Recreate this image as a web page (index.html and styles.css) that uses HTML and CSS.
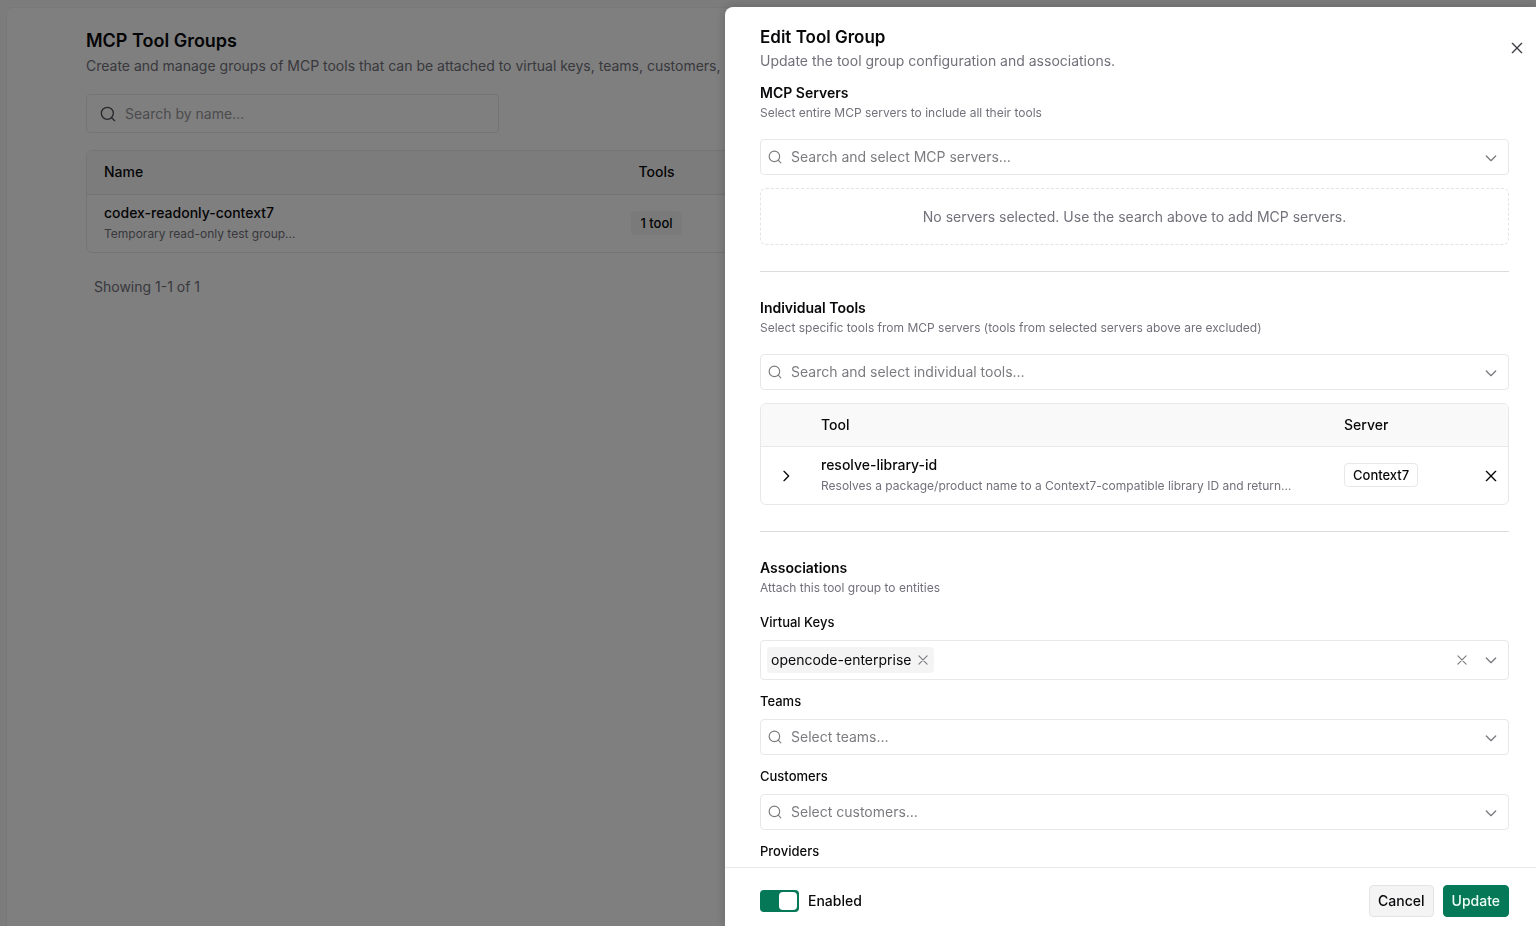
FILE: index.html
```html
<!DOCTYPE html>
<html lang="en">
<head>
<meta charset="utf-8">
<meta name="viewport" content="initial-scale=1.0, width=device-width">
<title>MCP Tool Groups</title>
<link rel="stylesheet" href="styles.css">
</head>
<body>

<!-- shared icons -->
<svg class="sprite" xmlns="http://www.w3.org/2000/svg">
  <symbol id="search" viewBox="0 0 24 24"><circle cx="11" cy="11" r="9"/><path d="M22 22l-4.5-4.5"/></symbol>
  <symbol id="down" viewBox="0 0 24 24"><path d="M5 9l7 7 7-7"/></symbol>
  <symbol id="right" viewBox="0 0 24 24"><path d="M9 5l7 7-7 7"/></symbol>
  <symbol id="x" viewBox="0 0 24 24"><path d="M19 5L5 19M5 5l14 14"/></symbol>
</svg>

<main class="page">
  <h1>MCP Tool Groups</h1>
  <p class="lead">Create and manage groups of MCP tools that can be attached to virtual keys, teams, customers, users</p>

  <label class="page-search">
    <svg class="icon"><use href="#search"/></svg>
    <input type="text" placeholder="Search by name…" aria-label="Search by name">
  </label>

  <div class="table-box">
    <table class="groups">
      <colgroup><col class="col-name"><col class="col-tools"><col></colgroup>
      <thead>
        <tr><th>Name</th><th class="mid">Tools</th><th></th></tr>
      </thead>
      <tbody>
        <tr>
          <td><div class="name">codex-readonly-context7</div><div class="sub">Temporary read-only test group…</div></td>
          <td class="mid"><span class="badge soft">1 tool</span></td>
          <td></td>
        </tr>
      </tbody>
    </table>
  </div>
  <p class="count">Showing 1-1 of 1</p>
</main>

<div class="overlay"></div>

<form class="sheet" role="dialog" aria-labelledby="sheet-title">
  <button type="button" class="plain close" aria-label="Close"><svg class="icon"><use href="#x"/></svg></button>

  <div class="content">
    <header>
      <h2 id="sheet-title">Edit Tool Group</h2>
      <p class="lead">Update the tool group configuration and associations.</p>
    </header>

    <section>
      <h3><label for="servers">MCP Servers</label></h3>
      <p class="hint">Select entire MCP servers to include all their tools</p>
      <div class="combo">
        <svg class="icon small"><use href="#search"/></svg>
        <input type="text" id="servers" role="combobox" placeholder="Search and select MCP servers…">
        <svg class="icon caret"><use href="#down"/></svg>
      </div>
      <div class="empty">No servers selected. Use the search above to add MCP servers.</div>
    </section>

    <hr>

    <section>
      <h3><label for="tools">Individual Tools</label></h3>
      <p class="hint">Select specific tools from MCP servers (tools from selected servers above are excluded)</p>
      <div class="combo">
        <svg class="icon small"><use href="#search"/></svg>
        <input type="text" id="tools" role="combobox" placeholder="Search and select individual tools…">
        <svg class="icon caret"><use href="#down"/></svg>
      </div>
      <div class="table-box picked">
        <table class="tools">
          <colgroup><col class="col-open"><col><col class="col-server"><col class="col-remove"></colgroup>
          <thead>
            <tr><th></th><th>Tool</th><th>Server</th><th></th></tr>
          </thead>
          <tbody>
            <tr>
              <td><button type="button" class="plain" aria-label="Expand"><svg class="icon"><use href="#right"/></svg></button></td>
              <td><div class="name">resolve-library-id</div><div class="sub">Resolves a package/product name to a Context7-compatible library ID and return…</div></td>
              <td><span class="badge line">Context7</span></td>
              <td><button type="button" class="plain" aria-label="Remove"><svg class="icon"><use href="#x"/></svg></button></td>
            </tr>
          </tbody>
        </table>
      </div>
    </section>

    <hr>

    <section>
      <h3>Associations</h3>
      <p class="hint tight">Attach this tool group to entities</p>

      <div class="field">
        <label for="keys">Virtual Keys</label>
        <div class="combo multi">
          <span class="tag">opencode-enterprise
            <button type="button" class="plain" aria-label="Remove opencode-enterprise"><svg class="icon small"><use href="#x"/></svg></button>
          </span>
          <input type="text" id="keys" role="combobox">
          <button type="button" class="plain" aria-label="Clear"><svg class="icon small"><use href="#x"/></svg></button>
          <svg class="icon caret"><use href="#down"/></svg>
        </div>
      </div>

      <div class="field">
        <label for="teams">Teams</label>
        <div class="combo">
          <svg class="icon small"><use href="#search"/></svg>
          <input type="text" id="teams" role="combobox" placeholder="Select teams…">
          <svg class="icon caret"><use href="#down"/></svg>
        </div>
      </div>

      <div class="field">
        <label for="customers">Customers</label>
        <div class="combo">
          <svg class="icon small"><use href="#search"/></svg>
          <input type="text" id="customers" role="combobox" placeholder="Select customers…">
          <svg class="icon caret"><use href="#down"/></svg>
        </div>
      </div>

      <div class="field">
        <span>Providers</span>
      </div>
    </section>
  </div>

  <footer>
    <label class="toggle"><input type="checkbox" checked>Enabled</label>
    <button type="button" class="btn">Cancel</button>
    <button type="submit" class="btn primary">Update</button>
  </footer>
</form>

</body>
</html>
```
FILE: styles.css
```css
html,body,h1,h2,h3,p{margin:0;padding:0;}
*{box-sizing:border-box;}
body{
  display:flex;
  min-height:100vh;
  padding:7px 7px 0 6px;
  background:#f8f8f8;
  color:#09090b;
  font-family:Inter,Roboto,Arial,sans-serif;
  font-size:14px;
  line-height:20px;
  overflow:hidden;
}
input,button{font:inherit;color:inherit;}
.sprite{display:none;}
.icon{
  flex:none;
  display:block;
  width:16px;
  height:16px;
  fill:none;
  stroke:currentColor;
  stroke-width:2;
  stroke-linecap:round;
  stroke-linejoin:round;
}
.small{width:14px;height:14px;}
.plain{
  display:inline-flex;
  padding:0;
  border:0;
  background:none;
  vertical-align:middle;
  cursor:pointer;
}

/* page behind the sheet */
.page{
  flex:1;
  min-width:0;
  padding:21px 72px 0 79px;
  background:#fff;
  border:1px solid #f0f0f0;
  border-bottom:0;
  border-radius:6px 6px 0 0;
}
h1{font-size:18px;line-height:24px;font-weight:600;}
.lead{color:#71717a;white-space:nowrap;}
.page .lead{margin-top:3px;}
.page-search{
  display:flex;
  align-items:center;
  gap:9px;
  width:413px;
  height:39px;
  margin:18px 0 17px;
  padding:0 13px;
  border:1px solid #e8e8ea;
  border-radius:4px;
}
.page-search .icon{color:#52525b;}
input[type=text]{
  flex:1;
  min-width:0;
  padding:0;
  border:0;
  outline:0;
  background:none;
}
::placeholder{color:#7c7c80;opacity:1;}
.page-search ::placeholder{color:#98989c;}
.count{padding:24px 8px;color:#71717a;}

.table-box{border:1px solid #e8e8ea;border-radius:6px;overflow:hidden;}
table{width:100%;table-layout:fixed;border-collapse:collapse;}
th,td{padding:0 17px;text-align:left;}
th{height:43px;font-weight:500;background:#f9f9f9;border-bottom:1px solid #e8e8ea;}
td{height:58px;}
.mid{padding:0;text-align:center;}
.name{font-weight:500;line-height:22px;}
.sub{font-size:12px;color:#71717a;white-space:nowrap;}
.col-name{width:39%;}
.col-tools{width:72px;}
.badge{
  display:inline-block;
  padding:0 8px;
  border:1px solid transparent;
  border-radius:4px;
  font-size:13px;
  font-weight:500;
  line-height:22px;
}
.soft{background:#f4f4f5;}
.line{border-color:#e8e8ea;}

.overlay{position:fixed;inset:0;background:rgba(0,0,0,0.5);}

/* edit sheet */
.sheet{
  position:fixed;
  top:7px;
  right:0;
  bottom:0;
  display:flex;
  flex-direction:column;
  width:53%;
  max-width:811px;
  background:#fff;
  border-radius:8px 0 0 0;
  box-shadow:0 0 12px rgba(0,0,0,0.2);
}
.close{position:absolute;top:33px;right:11px;color:#3f3f46;}
.content{flex:1;min-height:0;overflow:hidden;padding:20px 27px 0 35px;}
h2{font-size:17px;line-height:20px;font-weight:600;}
header .lead{margin-top:4px;}
header{margin-bottom:12px;}
h3{font-size:14px;line-height:20px;font-weight:600;}
.hint{font-size:12px;color:#71717a;margin-bottom:16px;}
.tight{margin-bottom:14px;}
hr{margin:26px 0;border:0;border-top:1px solid #dcdcdf;}
.combo{
  display:flex;
  align-items:center;
  gap:9px;
  height:36px;
  padding:0 9px 0 7px;
  border:1px solid #e8e8ea;
  border-radius:4px;
}
.combo .icon{color:#7c7c80;}
.combo .caret{margin-top:2px;}
.empty{
  margin-top:13px;
  padding:18px 18px 17px;
  border:1px dashed #e4e4e7;
  border-radius:6px;
  color:#71717a;
  text-align:center;
}
.picked{margin-top:13px;}
.tools th{height:42px;}
.tools .col-open{width:43px;}
.tools .col-server{width:132px;}
.tools .col-remove{width:49px;}
.tools td:last-child{padding:0 9px;text-align:right;}
.field{margin-bottom:11px;}
.field>label,.field>span{
  display:block;
  margin-bottom:8px;
  font-size:13px;
  font-weight:500;
}
.multi{height:40px;padding-left:6px;}
.multi>.plain{margin-right:5px;}
.multi .caret{margin-top:0;}
.tag{
  display:flex;
  align-items:center;
  gap:4px;
  height:26px;
  padding:0 4px;
  border-radius:4px;
  background:#f4f4f5;
}

footer{
  display:flex;
  align-items:center;
  gap:9px;
  padding:17px 27px 9px 35px;
  border-top:1px solid #e8e8ea;
}
.toggle{
  display:flex;
  align-items:center;
  gap:9px;
  margin-right:auto;
  font-weight:500;
}
.toggle input{
  appearance:none;
  display:flex;
  justify-content:flex-end;
  width:39px;
  height:22px;
  margin:0;
  padding:2px;
  border-radius:4px;
  background:#047857;
}
.toggle input::before{content:"";width:18px;height:18px;border-radius:4px;background:#fff;}
.btn{
  height:32px;
  padding:0 8px;
  border:1px solid #e4e4e7;
  border-radius:4px;
  background:#f4f4f5;
  font-weight:500;
}
.primary{border-color:#047857;background:#047857;color:#ecfdf5;}
```
